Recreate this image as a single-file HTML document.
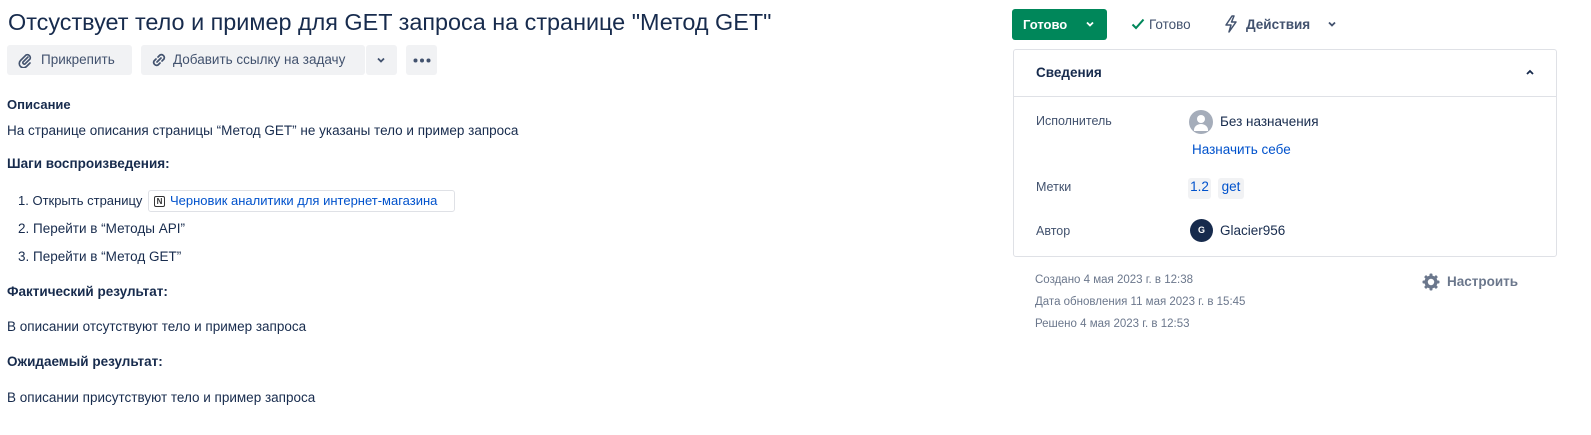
<!DOCTYPE html>
<html><head><meta charset="utf-8"><style>
*{margin:0;padding:0;box-sizing:border-box}
body{width:1591px;height:435px;background:#fff;font-family:"Liberation Sans","Noto Sans CJK SC",sans-serif;color:#172b4d;position:relative;overflow:hidden;font-size:13.5px}
.a{position:absolute;white-space:nowrap}
.btn{position:absolute;background:#f1f2f4;border-radius:3px;height:30px;top:45px;font-size:13.5px;color:#42526e;line-height:30px}
.b{font-weight:bold}
.lbl{color:#42526e;font-size:12.5px}
.meta{color:#6b778c;font-size:11.5px}
</style></head><body>
<div class="a" style="left:8px;top:7px;font-size:23.4px;line-height:30px;color:#172b4d">Отсуствует тело и пример для GET запроса на странице "Метод GET"</div>

<div class="btn" style="left:7px;width:125px"><svg style="position:absolute;left:10px;top:7px" width="16" height="16" viewBox="0 0 16 16"><path d="M11 5 L6 10 a1.5 1.5 0 0 0 2 2 L13 7 a3 3 0 0 0 -4 -4 L3.5 8.5 a4 4 0 0 0 6 6 L13 11" fill="none" stroke="#42526e" stroke-width="1.6" stroke-linecap="round"/></svg><span style="position:absolute;left:34px">Прикрепить</span></div>
<div class="btn" style="left:141px;width:224px"><svg style="position:absolute;left:9px;top:7px" width="18" height="16" viewBox="0 0 18 16"><path d="M8 5 l2-2 a3 3 0 0 1 4 4 l-2 2 M10 11 l-2 2 a3 3 0 0 1 -4 -4 l2-2 M7 10 l4-4" fill="none" stroke="#42526e" stroke-width="1.7" stroke-linecap="round"/></svg><span style="position:absolute;left:32px">Добавить ссылку на задачу</span></div>
<div class="btn" style="left:366px;width:31px"><svg style="position:absolute;left:10px;top:12px" width="10" height="7" viewBox="0 0 10 7"><path d="M2 1.5 L5 4.5 L8 1.5" fill="none" stroke="#42526e" stroke-width="1.8"/></svg></div>
<div class="btn" style="left:406px;width:31px"><svg style="position:absolute;left:7px;top:13px" width="18" height="5" viewBox="0 0 18 5"><circle cx="2.5" cy="2.5" r="2" fill="#42526e"/><circle cx="9" cy="2.5" r="2" fill="#42526e"/><circle cx="15.5" cy="2.5" r="2" fill="#42526e"/></svg></div>

<div class="a b" style="left:7px;top:97px;font-size:13px">Описание</div>
<div class="a" style="left:7px;top:123px">На странице описания страницы “Метод GET” не указаны тело и пример запроса</div>
<div class="a b" style="left:7px;top:156px">Шаги воспроизведения:</div>
<div class="a" style="left:18px;top:193px;font-size:13px">1. Открыть страницу</div>
<div class="a" style="left:148px;top:190px;width:307px;height:22px;border:1px solid #dfe1e6;border-radius:3px"><span style="position:absolute;left:5px;top:5px;width:11px;height:11px;border:1px solid #333;border-radius:2px;font-size:8px;line-height:9px;text-align:center;font-weight:bold;color:#333">N</span><span style="position:absolute;left:21px;top:2px;color:#0052cc;font-size:13px">Черновик аналитики для интернет-магазина</span></div>
<div class="a" style="left:18px;top:221px">2. Перейти в “Методы API”</div>
<div class="a" style="left:18px;top:249px">3. Перейти в “Метод GET”</div>
<div class="a b" style="left:7px;top:284px">Фактический результат:</div>
<div class="a" style="left:7px;top:319px">В описании отсутствуют тело и пример запроса</div>
<div class="a b" style="left:7px;top:354px">Ожидаемый результат:</div>
<div class="a" style="left:7px;top:390px">В описании присутствуют тело и пример запроса</div>

<div class="a" style="left:1012px;top:9px;width:95px;height:31px;background:#00875a;border-radius:3px;color:#fff;font-weight:bold;font-size:13px;line-height:31px;padding-left:11px">Готово<svg style="position:absolute;left:73px;top:12px" width="10" height="7" viewBox="0 0 10 7"><path d="M2 1.5 L5 4.5 L8 1.5" fill="none" stroke="#fff" stroke-width="1.8"/></svg></div>
<svg class="a" style="left:1131px;top:17px" width="14" height="14" viewBox="0 0 14 14"><path d="M1.5 7.5 L5 11 L12.5 2.5" fill="none" stroke="#00875a" stroke-width="2"/></svg>
<div class="a" style="left:1149px;top:17px;color:#42526e">Готово</div>
<svg class="a" style="left:1223px;top:15px" width="16" height="18" viewBox="0 0 16 18"><path d="M9 1 L3 10 H8 L6 17 L13 7 H8.5 L11 1 Z" fill="none" stroke="#42526e" stroke-width="1.5" stroke-linejoin="round"/></svg>
<div class="a b" style="left:1246px;top:17px;color:#42526e">Действия</div>
<svg class="a" style="left:1327px;top:21px" width="10" height="7" viewBox="0 0 10 7"><path d="M2 1.5 L5 4.5 L8 1.5" fill="none" stroke="#42526e" stroke-width="1.8"/></svg>

<div class="a" style="left:1013px;top:49px;width:544px;height:208px;border:1px solid #dfe1e6;border-radius:3px"></div>
<div class="a" style="left:1014px;top:96px;width:542px;height:1px;background:#dfe1e6"></div>
<div class="a" style="left:1036px;top:65px;font-size:13.5px;font-weight:bold;color:#172b4d">Сведения</div>
<svg class="a" style="left:1525px;top:69px" width="10" height="7" viewBox="0 0 10 7"><path d="M2 5 L5 2 L8 5" fill="none" stroke="#172b4d" stroke-width="1.8"/></svg>

<div class="a lbl" style="left:1036px;top:114px">Исполнитель</div>
<svg class="a" style="left:1189px;top:110px" width="24" height="24" viewBox="0 0 24 24"><circle cx="12" cy="12" r="12" fill="#a5adba"/><circle cx="12" cy="9" r="4" fill="#fff"/><path d="M5 20 a7 6 0 0 1 14 0 v1 h-14z" fill="#fff"/></svg>
<div class="a" style="left:1220px;top:114px">Без назначения</div>
<div class="a" style="left:1192px;top:142px;color:#0052cc">Назначить себе</div>
<div class="a lbl" style="left:1036px;top:180px">Метки</div>
<div class="a" style="left:1188px;top:178px;height:21px;width:23px;background:#f1f2f4;border-radius:3px;color:#0052cc;line-height:18px;text-align:center">1.2</div>
<div class="a" style="left:1218px;top:178px;height:21px;width:26px;background:#f1f2f4;border-radius:3px;color:#0052cc;line-height:18px;text-align:center">get</div>
<div class="a lbl" style="left:1036px;top:224px">Автор</div>
<div class="a" style="left:1190px;top:219px;width:23px;height:23px;border-radius:50%;background:#172b4d;color:#fff;font-size:9px;font-weight:bold;line-height:23px;text-align:center">G</div>
<div class="a" style="left:1220px;top:223px">Glacier956</div>

<div class="a meta" style="left:1035px;top:274px">Создано 4 мая 2023 г. в 12:38</div>
<div class="a meta" style="left:1035px;top:296px">Дата обновления 11 мая 2023 г. в 15:45</div>
<div class="a meta" style="left:1035px;top:318px">Решено 4 мая 2023 г. в 12:53</div>
<svg class="a" style="left:1422px;top:273px" width="18" height="18" viewBox="0 0 18 18"><g fill="#6b778c"><circle cx="9" cy="9" r="6.5"/><rect x="7.5" y="0.5" width="3" height="17" rx="1"/><rect x="0.5" y="7.5" width="17" height="3" rx="1"/><rect x="7.5" y="0.5" width="3" height="17" rx="1" transform="rotate(45 9 9)"/><rect x="7.5" y="0.5" width="3" height="17" rx="1" transform="rotate(-45 9 9)"/></g><circle cx="9" cy="9" r="3.2" fill="#fff"/></svg>
<div class="a b" style="left:1447px;top:274px;color:#6b778c;font-size:13.5px">Настроить</div>
</body></html>
